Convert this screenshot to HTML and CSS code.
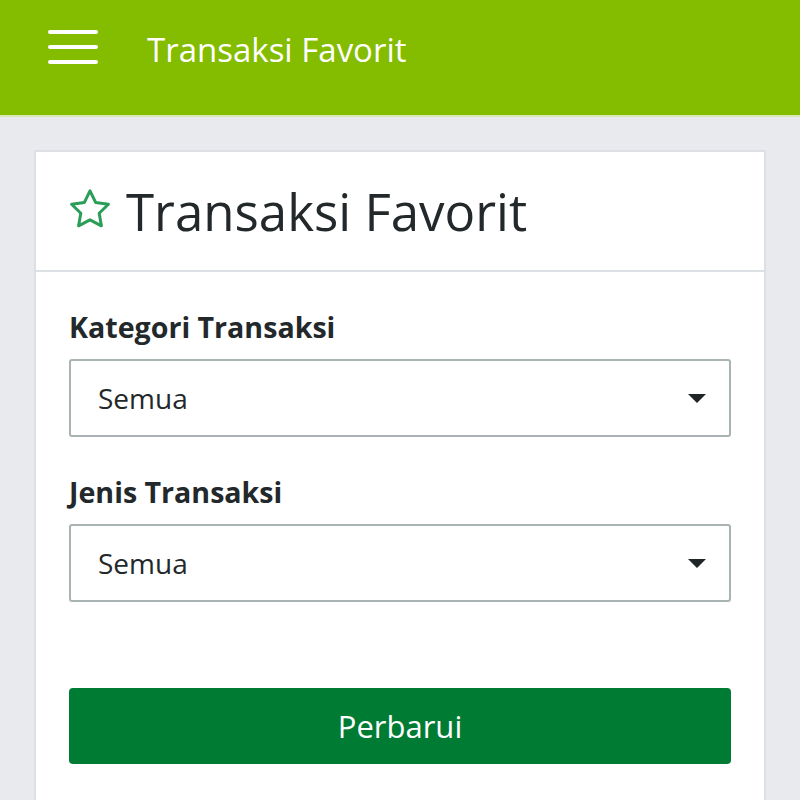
FILE: index.html
```html
<!DOCTYPE html>
<html lang="id">
<head>
    <meta charset="UTF-8">
    <meta name="viewport" content="width=device-width, initial-scale=1.0">
    <title>Transaksi Favorit</title>
    <link rel="stylesheet" href="styles.css">
</head>
<body>
    <header class="topbar">
        <button class="menu-btn" type="button">
            <span></span><span></span><span></span>
        </button>
        <h1 class="topbar-title">Transaksi Favorit</h1>
    </header>

    <main class="page">
        <section class="card">
            <div class="card-head">
                <svg class="star" viewBox="0 0 24 24" width="48" height="48">
                    <path d="M12 2.4l2.8 5.8 6.4.9-4.6 4.5 1.1 6.3L12 16.9l-5.7 3 1.1-6.3-4.6-4.5 6.4-.9z"
                          fill="none" stroke="#2a9d57" stroke-width="1.5" stroke-linejoin="round"/>
                </svg>
                <h2 class="card-title">Transaksi Favorit</h2>
            </div>
            <form class="card-body">
                <label class="field-label">Kategori Transaksi</label>
                <div class="select">
                    <span>Semua</span>
                    <i class="caret"></i>
                </div>

                <label class="field-label">Jenis Transaksi</label>
                <div class="select">
                    <span>Semua</span>
                    <i class="caret"></i>
                </div>

                <button class="btn-submit" type="button">Perbarui</button>
            </form>
        </section>
    </main>
</body>
</html>
```

FILE: styles.css
```css
*{
    margin: 0;
    padding: 0;
    box-sizing: border-box;
}
body{
    font-family: "Open Sans", "Noto Sans", sans-serif;
    background: #e9eaee;
    color: #23282b;
}
.topbar{
    height: 117px;
    background: #84bc00;
    border-bottom: 2px solid #d8e6b8;
    display: flex;
    align-items: flex-start;
    padding-left: 48px;
}
.menu-btn{
    width: 50px;
    height: 34px;
    margin-top: 30px;
    background: none;
    border: 0;
    display: flex;
    flex-direction: column;
    justify-content: space-between;
}
.menu-btn span{
    display: block;
    height: 4px;
    border-radius: 2px;
    background: #ffffff;
}
.topbar-title{
    color: #ffffff;
    font-weight: 400;
    font-size: 33px;
    line-height: 56px;
    margin-left: 49px;
    margin-top: 22px;
}
.page{
    padding: 33px 34px 0 34px;
}
.card{
    background: #ffffff;
    border: 2px solid #dcdfe3;
    border-bottom: 0;
    min-height: 660px;
}
.card-head{
    height: 120px;
    border-bottom: 2px solid #dcdfe3;
    display: flex;
    align-items: center;
    padding: 0 0 0 30px;
}
.star{
    display: block;
    margin-right: 12px;
    margin-top: -2px;
}
.card-title{
    font-weight: 400;
    font-size: 51px;
    color: #23282b;
}
.card-body{
    padding: 37px 33px 0 33px;
    display: flex;
    flex-direction: column;
}
.field-label{
    font-weight: 700;
    font-size: 28.6px;
    line-height: 36px;
    color: #23282b;
}
.select{
    margin-top: 14px;
    margin-bottom: 37px;
    height: 78px;
    border: 2px solid #a9b3b3;
    border-radius: 3px;
    display: flex;
    align-items: center;
    justify-content: space-between;
    padding: 0 23px 0 27px;
    font-size: 28px;
    color: #23282b;
}
.caret{
    width: 0;
    height: 0;
    border-left: 9px solid transparent;
    border-right: 9px solid transparent;
    border-top: 9px solid #1f2426;
}
.btn-submit{
    margin-top: 49px;
    height: 76px;
    background: #007b34;
    border: 0;
    border-radius: 4px;
    color: #ffffff;
    font-family: "Open Sans", "Noto Sans", sans-serif;
    font-size: 31px;
}
```
